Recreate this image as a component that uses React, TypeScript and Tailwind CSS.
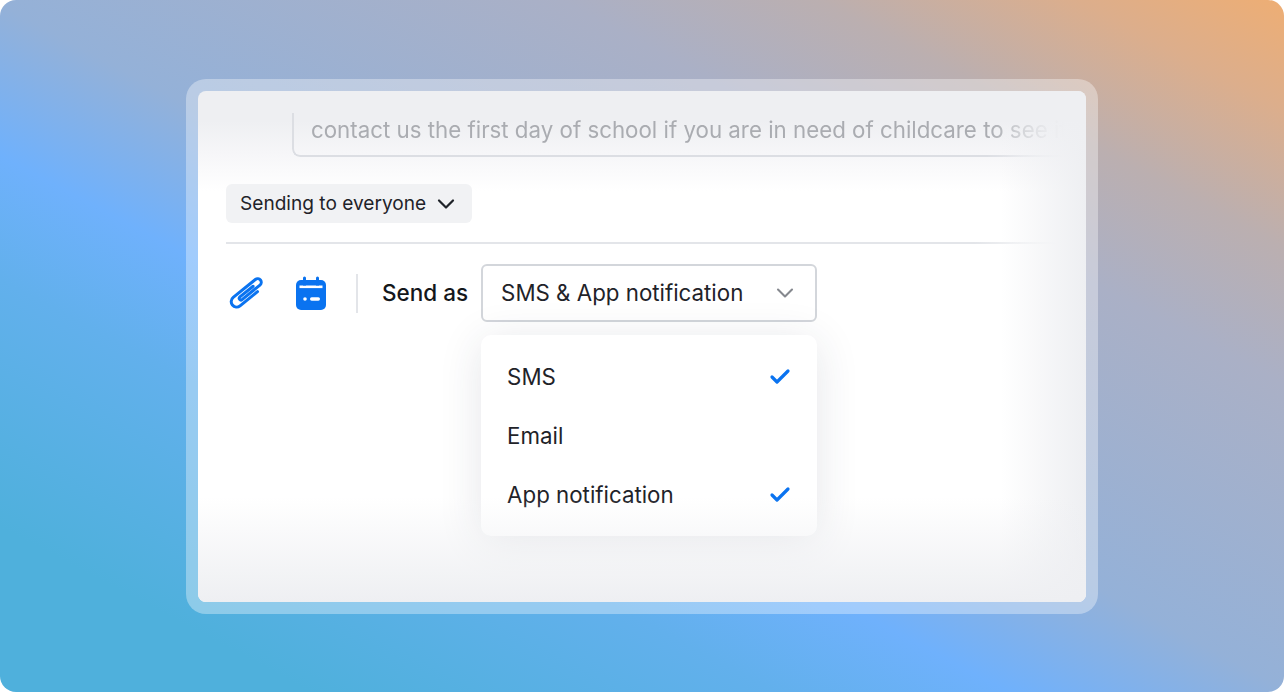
import React from 'react';
import { Check, ChevronDown } from 'lucide-react';

function PaperclipIcon() {
  return (
    <svg width="36" height="34" viewBox="-18 -17 36 34" fill="none" className="shrink-0">
      <g transform="rotate(-39)" stroke="#0a73f0" strokeWidth="3" strokeLinecap="round" strokeLinejoin="round">
        <path d="M9 -1.4 L-8 -1.4 A1.6 1.6 0 0 0 -8 2 L15 2 A3.6 3.6 0 0 0 15 -5.2 L-13.5 -5.2 A5.4 5.4 0 0 0 -13.5 5.6 L9 5.6" />
      </g>
    </svg>
  );
}

function CalendarIcon() {
  return (
    <svg width="30" height="34" viewBox="0 0 30 34" fill="none" className="shrink-0">
      <rect x="0" y="4" width="30" height="30" rx="5" fill="#0a73f0" />
      <rect x="7" y="0.5" width="3" height="8" rx="1.5" fill="#0a73f0" />
      <rect x="20" y="0.5" width="3" height="8" rx="1.5" fill="#0a73f0" />
      <rect x="3.5" y="9.5" width="23" height="2.6" fill="#ffffff" />
      <rect x="7" y="6" width="3" height="3.5" fill="#0a73f0" />
      <rect x="20" y="6" width="3" height="3.5" fill="#0a73f0" />
      <circle cx="9" cy="23" r="1.8" fill="#ffffff" />
      <rect x="14" y="21.3" width="10" height="3.4" rx="1.7" fill="#ffffff" />
    </svg>
  );
}

function Option({ label, checked }: { label: string; checked?: boolean }) {
  return (
    <div className="flex h-[59px] items-center justify-between pl-[26px] pr-[25px]">
      <span className="text-[22.3px] text-[#1f2329]">{label}</span>
      {checked && <Check className="h-[24px] w-[24px] text-[#0a73f0]" strokeWidth={3.2} />}
    </div>
  );
}

export default function App() {
  return (
    <div className="h-[692px] w-[1284px] overflow-hidden bg-white font-['Inter',sans-serif]">
      <div className="flex h-full w-full justify-center rounded-2xl bg-[linear-gradient(28deg,#4fb0dc_0%,#4fb0dc_12%,#62b0ec_30%,#6fb1fc_39%,#94b1d8_50%,#aab0c6_72%,#bbafb0_82%,#dcae8c_92%,#eeae74_100%)] pt-[79px]">
        <div className="h-[535px] w-[912px] rounded-[20px] bg-white/35 p-3">
          <div className="relative h-[511px] w-[888px] overflow-hidden rounded-lg bg-[linear-gradient(to_bottom,#eeeff2_0px,#eeeff2_30px,#f6f6f8_62px,#ffffff_100px)]">
            <div className="ml-[94px] mr-[22px] mt-[22px] flex h-[44px] items-end rounded-bl-lg border-b-2 border-l-2 border-[#dcdee3] pb-[9px] pl-[17px] [mask-image:linear-gradient(to_right,black_90%,transparent_100%)]">
              <span className="text-[22.3px] whitespace-nowrap text-[#aaacb1]">
                contact us the first day of school if you are in need of childcare to see if
              </span>
            </div>

            <div className="ml-[28px] mt-[27px] flex h-[39px] w-[246px] items-center gap-[6px] rounded-md bg-[#f1f2f4] pl-[14px]">
              <span className="text-[19.1px] text-[#1f2329]">Sending to everyone</span>
              <ChevronDown className="h-[28px] w-[28px] text-[#1f2329]" strokeWidth={1.9} />
            </div>

            <div className="ml-[28px] mt-[19px] h-[2px] w-[832px] bg-[linear-gradient(to_right,#e3e5e9_90%,transparent)]" />

            <div className="ml-[31px] mt-[20px] flex items-center">
              <PaperclipIcon />
              <div className="ml-[31px]">
                <CalendarIcon />
              </div>
              <div className="ml-[30px] h-[39px] w-[2px] bg-[#e3e5e9]" />
              <span className="ml-[24px] text-[22.5px] font-medium text-[#14171b]">Send as</span>
              <div className="relative ml-[13px]">
                <div className="flex h-[58px] w-[336px] items-center justify-between rounded-md border-2 border-[#d3d6db] pl-[18px] pr-[16px]">
                  <span className="text-[22.3px] text-[#1f2329]">SMS &amp; App notification</span>
                  <ChevronDown className="h-[28px] w-[28px] text-[#85888e]" strokeWidth={1.8} />
                </div>
                <div className="absolute left-0 top-[71px] h-[201px] w-[336px] rounded-[10px] bg-white py-[12px] shadow-[0_6px_44px_rgba(40,50,70,0.12)]">
                  <Option label="SMS" checked />
                  <Option label="Email" />
                  <Option label="App notification" checked />
                </div>
              </div>
            </div>

            {/* edge fade over the card */}
            <div className="pointer-events-none absolute inset-0 bg-[linear-gradient(to_top,#eeeff2_0%,#eeeff2aa_35px,transparent_105px),linear-gradient(to_left,#eeeff2_0%,#eeeff2aa_30px,transparent_85px)]" />
          </div>
        </div>
      </div>
    </div>
  );
}
